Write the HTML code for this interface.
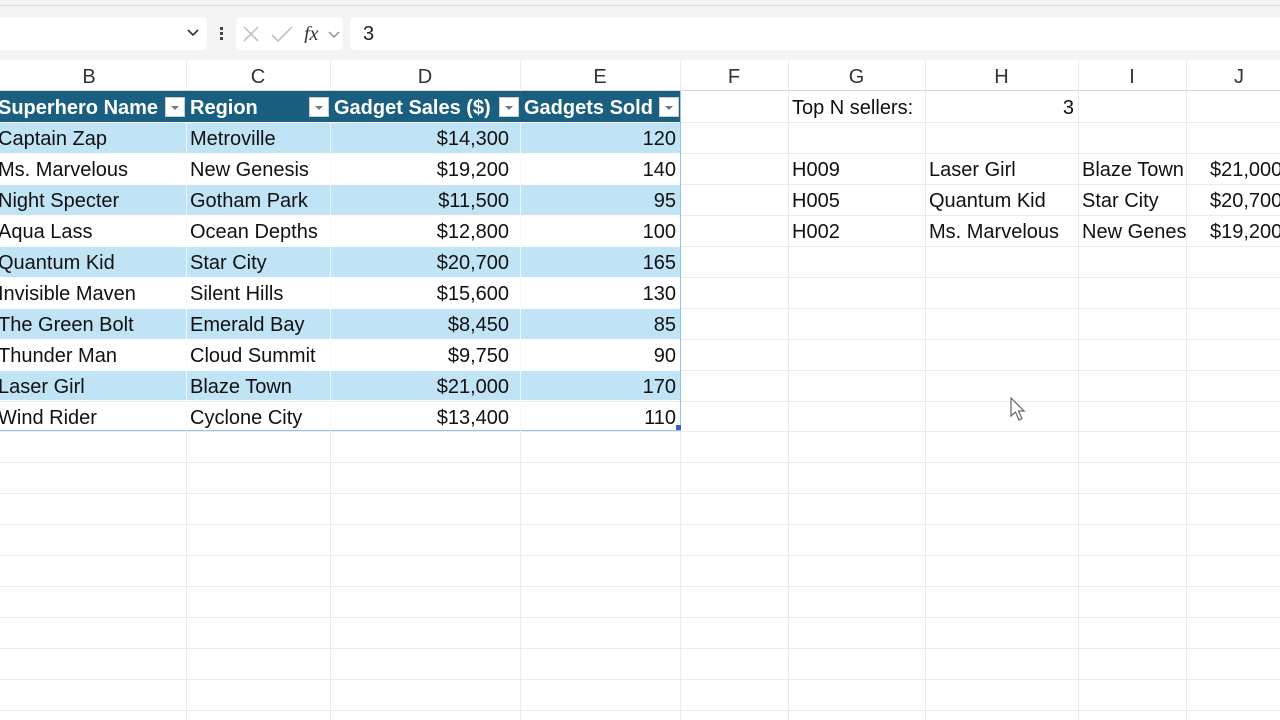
<!DOCTYPE html><html><head><style>
body{margin:0;width:1280px;height:720px;overflow:hidden;background:#fff;font-family:"Liberation Sans",Arial,sans-serif;position:relative}
.a{position:absolute}
.c{position:absolute;height:31px;line-height:31px;padding-top:2px;font-size:20px;color:#111;white-space:nowrap;overflow:hidden;box-sizing:border-box}
.r{text-align:right;padding-right:4px}
.l{padding-left:4px}
.h{font-weight:bold;color:#fff}
.dd{position:absolute;top:6px;width:20px;height:20px;background:#fff;border:1px solid #ccc;box-sizing:border-box}
.dd:after{content:"";position:absolute;left:5px;top:8px;border-left:4px solid transparent;border-right:4px solid transparent;border-top:4px solid #777}
.ch{position:absolute;top:62px;height:31px;line-height:31px;text-align:center;font-size:20px;color:#333}
</style></head><body>
<div class="a" style="left:0;top:0;width:1280px;height:60px;background:#f3f3f3"></div>
<div class="a" style="left:0;top:5px;width:1280px;height:1px;background:#ddd"></div>
<div class="a" style="left:0;top:17px;width:207px;height:33px;background:#fff;border-radius:0 5px 5px 0"></div>
<svg class="a" style="left:186px;top:28px" width="14" height="10"><path d="M2 2 L7 7 L12 2" stroke="#333" stroke-width="1.6" fill="none"/></svg>
<div class="a" style="left:220px;top:27px;width:3px;height:3px;background:#444;box-shadow:0 5px 0 #444,0 10px 0 #444"></div>
<div class="a" style="left:236px;top:17px;width:107px;height:33px;background:#fff;border-radius:5px"></div>
<svg class="a" style="left:242px;top:25px" width="100" height="18"><path d="M2 2 L16 16 M16 2 L2 16" stroke="#bbb" stroke-width="1.5"/><path d="M30 10 L36 16 L50 2" stroke="#bbb" stroke-width="1.5" fill="none"/><text x="62" y="15" font-family="Liberation Serif" font-style="italic" font-size="20" fill="#333">fx</text><path d="M87 7 L92 12 L97 7" stroke="#888" stroke-width="1.3" fill="none"/></svg>
<div class="a" style="left:350px;top:17px;width:930px;height:33px;background:#fff;border-radius:5px 0 0 5px"></div>
<div class="a" style="left:363px;top:18px;line-height:33px;font-size:20px;color:#222">3</div>
<div class="a" style="left:0;top:90px;width:1280px;height:1px;background:#d8d8d8"></div>
<div class="ch" style="left:0;width:178px">B</div><div class="ch" style="left:186px;width:144px">C</div><div class="ch" style="left:330px;width:190px">D</div><div class="ch" style="left:520px;width:160px">E</div><div class="ch" style="left:680px;width:108px">F</div><div class="ch" style="left:788px;width:137px">G</div><div class="ch" style="left:925px;width:153px">H</div><div class="ch" style="left:1078px;width:108px">I</div><div class="ch" style="left:1186px;width:106px">J</div>
<svg class="a" style="left:0;top:60px" width="1280" height="660">
<g stroke="#ebebeb" stroke-width="1">
<path d="M186.5 0V660M330.5 0V660M520.5 0V660M680.5 0V660M788.5 0V660M925.5 0V660M1078.5 0V660M1186.5 0V660"/>
<path d="M0 62.5H1280M0 93.5H1280M0 124.5H1280M0 155.5H1280M0 186.5H1280M0 217.5H1280M0 248.5H1280M0 279.5H1280M0 310.5H1280M0 341.5H1280M0 371.5H1280M0 402.5H1280M0 433.5H1280M0 464.5H1280M0 495.5H1280M0 526.5H1280M0 557.5H1280M0 588.5H1280M0 619.5H1280M0 650.5H1280"/>
</g></svg>
<div class="a" style="left:0;top:91px;width:681px;height:31px;background:#1b5f80"></div>
<div class="a" style="left:0;top:122px;width:681px;height:31px;background:#c0e4f5"></div>
<div class="a" style="left:0;top:184px;width:681px;height:31px;background:#c0e4f5"></div>
<div class="a" style="left:0;top:246px;width:681px;height:31px;background:#c0e4f5"></div>
<div class="a" style="left:0;top:308px;width:681px;height:31px;background:#c0e4f5"></div>
<div class="a" style="left:0;top:370px;width:681px;height:31px;background:#c0e4f5"></div>
<svg class="a" style="left:0;top:91px" width="682" height="341"><g stroke="#8cc8e8"><path d="M0 31.5H681M0 62.5H681M0 93.5H681M0 124.5H681M0 155.5H681M0 186.5H681M0 217.5H681M0 248.5H681M0 279.5H681M0 309.5H681" stroke="#fff" stroke-opacity=".9"/><path d="M680.5 0V340M0 339.5H681"/></g><path d="M186.5 31V340M330.5 31V340M520.5 31V340" stroke="#fff" stroke-opacity=".7"/><rect x="676" y="334" width="5" height="5" fill="#3a5fcf"/></svg>
<div class="c h" style="left:-2px;top:91px;width:186px">Superhero Name</div><div class="dd" style="left:165px;top:97px"></div>
<div class="c h l" style="left:186px;top:91px;width:144px">Region</div><div class="dd" style="left:309px;top:97px"></div>
<div class="c h l" style="left:330px;top:91px;width:190px">Gadget Sales ($)</div><div class="dd" style="left:499px;top:97px"></div>
<div class="c h l" style="left:520px;top:91px;width:160px">Gadgets Sold</div><div class="dd" style="left:659px;top:97px"></div>
<div id="d"></div>
<div class="c" style="left:792px;top:91px">Top N sellers:</div><div class="c r" style="left:925px;top:91px;width:153px">3</div>
<div class="c" style="left:792px;top:153px">H009</div><div class="c" style="left:929px;top:153px">Laser Girl</div><div class="c" style="left:1082px;top:153px;width:104px">Blaze Town</div><div class="c" style="left:1210px;top:153px">$21,000</div>
<div class="c" style="left:792px;top:184px">H005</div><div class="c" style="left:929px;top:184px">Quantum Kid</div><div class="c" style="left:1082px;top:184px;width:104px">Star City</div><div class="c" style="left:1210px;top:184px">$20,700</div>
<div class="c" style="left:792px;top:215px">H002</div><div class="c" style="left:929px;top:215px">Ms. Marvelous</div><div class="c" style="left:1082px;top:215px;width:104px">New Genesis</div><div class="c" style="left:1210px;top:215px">$19,200</div>
<svg class="a" style="left:1010px;top:397px" width="18" height="26"><path d="M1 1 L1 19 L5.5 15 L9 23 L12 21.5 L8.5 14 L14 14 Z" fill="#fff" stroke="#666" stroke-width="1.2"/></svg>
<script>
var d=[["Captain Zap","Metroville","$14,300","120"],["Ms. Marvelous","New Genesis","$19,200","140"],["Night Specter","Gotham Park","$11,500","95"],["Aqua Lass","Ocean Depths","$12,800","100"],["Quantum Kid","Star City","$20,700","165"],["Invisible Maven","Silent Hills","$15,600","130"],["The Green Bolt","Emerald Bay","$8,450","85"],["Thunder Man","Cloud Summit","$9,750","90"],["Laser Girl","Blaze Town","$21,000","170"],["Wind Rider","Cyclone City","$13,400","110"]];
var h="";d.forEach(function(r,i){var t=122+31*i;h+='<div class="c" style="left:-2px;top:'+t+'px;width:186px">'+r[0]+'</div><div class="c l" style="left:186px;top:'+t+'px;width:144px">'+r[1]+'</div><div class="c r" style="left:330px;top:'+t+'px;width:183px">'+r[2]+'</div><div class="c r" style="left:520px;top:'+t+'px;width:160px">'+r[3]+'</div>';});
document.getElementById("d").innerHTML=h;
</script>
</body></html>
